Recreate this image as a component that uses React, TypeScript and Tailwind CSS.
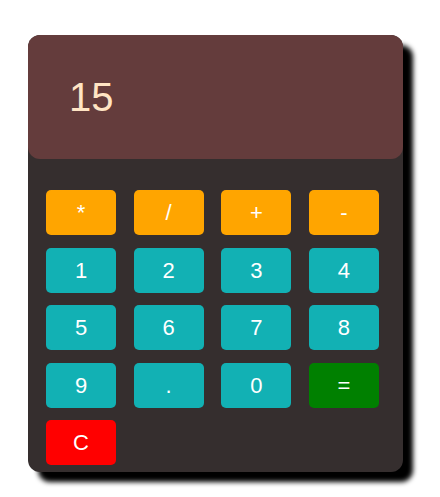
import React from "react";

const keys: { label: string; cls: string }[] = [
  { label: "*", cls: "bg-[#ffa500]" },
  { label: "/", cls: "bg-[#ffa500]" },
  { label: "+", cls: "bg-[#ffa500]" },
  { label: "-", cls: "bg-[#ffa500]" },
  { label: "1", cls: "bg-[#12b1b4]" },
  { label: "2", cls: "bg-[#12b1b4]" },
  { label: "3", cls: "bg-[#12b1b4]" },
  { label: "4", cls: "bg-[#12b1b4]" },
  { label: "5", cls: "bg-[#12b1b4]" },
  { label: "6", cls: "bg-[#12b1b4]" },
  { label: "7", cls: "bg-[#12b1b4]" },
  { label: "8", cls: "bg-[#12b1b4]" },
  { label: "9", cls: "bg-[#12b1b4]" },
  { label: ".", cls: "bg-[#12b1b4]" },
  { label: "0", cls: "bg-[#12b1b4]" },
  { label: "=", cls: "bg-[#008000]" },
  { label: "C", cls: "bg-[#ff0000]" },
];

export default function App() {
  return (
    <div className="w-[440px] h-[497px] bg-white pt-[35px] pl-[28px]" style={{ fontFamily: '"Liberation Sans", Arial, sans-serif' }}>
      <div className="w-[375px] h-[437px] rounded-[12px] bg-[#352e2e] shadow-[10px_10px_5px_#000] flex flex-col">
        <div className="h-[124px] rounded-[12px] bg-[#643c3c] pt-[39px] pl-[41px] text-[40px] leading-[46px] text-[#ffe4c4]">
          15
        </div>
        <div className="mt-[31px] ml-[18px] w-[333px] grid grid-cols-[repeat(4,70px)] justify-between gap-y-[12.5px]">
          {keys.map((k) => (
            <button
              key={k.label}
              className={`h-[45px] w-[70px] rounded-[5px] ${k.cls} text-white text-[22px] flex items-center justify-center`}
            >
              {k.label}
            </button>
          ))}
        </div>
      </div>
    </div>
  );
}
